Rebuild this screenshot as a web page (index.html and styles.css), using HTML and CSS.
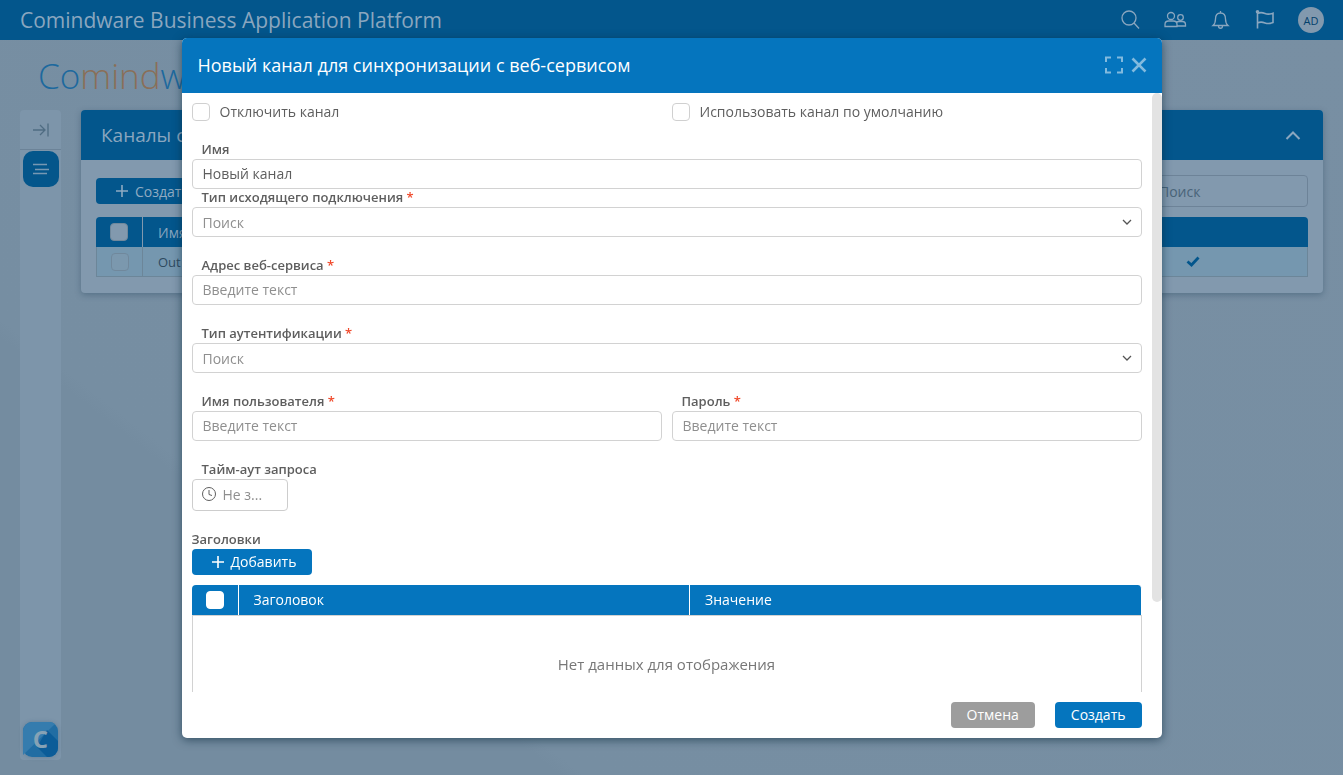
FILE: index.html
```html
<!DOCTYPE html>
<html lang="ru">
<head>
<meta charset="utf-8">
<title>Comindware Business Application Platform</title>
<link rel="stylesheet" href="styles.css">
</head>
<body>
<div class="app">
  <header class="topbar">
    <div class="topbar-title">Comindware Business Application Platform</div>
    <nav class="topbar-actions">
      <button class="icon-btn" aria-label="search"><svg width="24" height="24" viewBox="0 0 24 24"><circle cx="11" cy="10" r="7"/><path d="M16 15l5 5.500"/></svg></button>
      <button class="icon-btn" aria-label="users"><svg width="24" height="24" viewBox="0 0 24 24"><circle cx="8" cy="8" r="3.500"/><circle cx="17.500" cy="9.500" r="2.800"/><path d="M2 18.500v-2c0-2 1.500-3.500 3.500-3.500h5c2 0 3.500 1.500 3.500 3.500v2zM13.500 14.500c.6-.7 1.400-1 2.300-1h3.700c2 0 3 1.300 3 3v1.500h-8.500"/></svg></button>
      <button class="icon-btn" aria-label="notifications"><svg width="24" height="24" viewBox="0 0 24 24"><path d="M12.500 3v2M5 17.500c1.800-1.500 2.500-3 2.500-6.500 0-4 2-6 5-6s5 2 5 6c0 3.500.7 5 2.500 6.500zM10.500 18c0 3 4 3 4 0"/></svg></button>
      <button class="icon-btn" aria-label="flag"><svg class="flag" width="24" height="24" viewBox="0 0 24 24"><path d="M4.500 3v17.500M4.500 5.500c3-1.500 5-1 7.500 0s5 .8 8-.3v9.300c-3 1.300-5.500 1.300-8 .4s-4.500-1.300-7.500 0"/><circle cx="4.500" cy="3.800" r="1"/></svg></button>
      <button class="avatar">AD</button>
    </nav>
  </header>
  <div class="brand">Co<span class="brand-accent">mind</span>ware</div>
  <div class="workspace">
    <aside class="sidebar">
      <button class="side-toggle" aria-label="expand"><svg width="20" height="16" viewBox="0 0 20 16"><path d="M2 8h12M9 3l5 5-5 5M17 1.500v13"/></svg></button>
      <button class="side-menu" aria-label="menu"><svg width="18" height="12" viewBox="0 0 18 12"><path d="M1 1.500h14M3 6.500h14M1 10.500h14"/></svg></button>
      <div class="side-logo">
        <svg class="side-logo-art" viewBox="0 0 35 35"><rect width="35" height="35" rx="9" fill="#216da3"/><path d="M0 33V9a9 9 0 0 1 9-9h17a9 9 0 0 1 6 2z" fill="#357cae"/><path d="M24 8l11 11v7a9 9 0 0 1-9 9h-2L14 25z" fill="#0b5c98"/></svg>
        <span class="side-logo-letter">C</span>
      </div>
    </aside>
    <section class="panel">
      <div class="panel-head"><h2 class="panel-title">Каналы синхронизации</h2>
        <button class="icon-btn" aria-label="collapse"><svg class="medium" width="16" height="10" viewBox="0 0 16 10"><path d="M1.500 9L8 2.500 14.500 9"/></svg></button></div>
      <div class="panel-body">
        <div class="toolbar">
          <button class="btn btn-dim"><svg width="12" height="12" viewBox="0 0 12 12"><path d="M6 0v12M0 6h12"/></svg>Создать</button>
          <input class="search" type="text" placeholder="Поиск" aria-label="Поиск">
        </div>
        <table class="list">
          <thead><tr><th class="check-col"><input class="check" type="checkbox" aria-label="all"></th><th class="name-cell">Имя</th><th class="mark-col"></th></tr></thead>
          <tbody><tr><td class="check-col"><input class="check" type="checkbox" aria-label="row"></td><td class="name-cell">Out</td><td class="mark-col"><svg class="tick" width="14" height="11" viewBox="0 0 14 11"><path d="M1.500 5.500l4 3.500 7-7.500"/></svg></td></tr></tbody>
        </table>
      </div>
    </section>
  </div>
</div>

<div class="overlay">
  <form class="dialog" role="dialog" aria-labelledby="dialog-title">
    <div class="dialog-head">
      <h1 class="dialog-title" id="dialog-title">Новый канал для синхронизации с веб-сервисом</h1>
      <div class="dialog-tools">
        <button type="button" class="icon-btn" aria-label="fullscreen"><svg class="medium" width="18" height="18" viewBox="0 0 18 18"><path d="M1 6V1.500h5M12 1.500h5V6M17 12v4.500h-5M6 16.500H1V12"/></svg></button>
        <button type="button" class="icon-btn" aria-label="close"><svg class="thick" width="16" height="16" viewBox="0 0 16 16"><path d="M1.500 1.500l13 13M14.500 1.500l-13 13"/></svg></button>
      </div>
    </div>
    <div class="dialog-body">
      <div class="columns">
        <label class="check-line"><input class="check" type="checkbox">Отключить канал</label>
        <label class="check-line"><input class="check" type="checkbox">Использовать канал по умолчанию</label>
      </div>
      <div class="fields">
        <div class="field tight"><label for="name">Имя</label><input class="control" id="name" type="text" value="Новый канал"></div>
        <div class="field"><label for="conn">Тип исходящего подключения <span class="req">*</span></label>
          <div class="select-box"><select class="control" id="conn"><option>Поиск</option></select><svg class="chevron" width="10" height="6" viewBox="0 0 10 6"><path d="M1 1l4 4 4-4"/></svg></div></div>
        <div class="field"><label for="addr">Адрес веб-сервиса <span class="req">*</span></label><input class="control" id="addr" type="text" placeholder="Введите текст"></div>
        <div class="field"><label for="auth">Тип аутентификации <span class="req">*</span></label>
          <div class="select-box"><select class="control" id="auth"><option>Поиск</option></select><svg class="chevron" width="10" height="6" viewBox="0 0 10 6"><path d="M1 1l4 4 4-4"/></svg></div></div>
        <div class="columns">
          <div class="field"><label for="user">Имя пользователя <span class="req">*</span></label><input class="control" id="user" type="text" placeholder="Введите текст"></div>
          <div class="field"><label for="pass">Пароль <span class="req">*</span></label><input class="control" id="pass" type="password" placeholder="Введите текст"></div>
        </div>
        <div class="field"><label for="timeout">Тайм-аут запроса</label>
          <div class="duration"><svg width="16" height="16" viewBox="0 0 16 16"><circle cx="8" cy="7" r="6.500"/><path d="M8 3v4.500l3 1"/></svg><input class="duration-input" id="timeout" type="text" placeholder="Не з..."></div></div>
      </div>
      <div class="headers-title">Заголовки</div>
      <button type="button" class="btn"><svg width="12" height="12" viewBox="0 0 12 12"><path d="M6 0v12M0 6h12"/></svg>Добавить</button>
      <table class="grid">
        <thead><tr><th class="check-col"><input class="check" type="checkbox" aria-label="all"></th><th>Заголовок</th><th>Значение</th></tr></thead>
        <tbody><tr><td class="empty" colspan="3">Нет данных для отображения</td></tr></tbody>
      </table>
      <div class="scroll-thumb"></div>
    </div>
    <div class="dialog-foot">
      <button type="button" class="btn-foot btn-cancel">Отмена</button>
      <button type="submit" class="btn-foot">Создать</button>
    </div>
  </form>
</div>
</body>
</html>
```
FILE: styles.css
```css
* { box-sizing: border-box; }
html, body { height: 100%; }
body { margin: 0; font-family: "Open Sans", "Noto Sans", sans-serif; font-size: 14px; color: #5e5e5e; overflow: hidden; }
button, input, select { font: inherit; color: inherit; }
button { border: 0; padding: 0; background: none; cursor: pointer; }
svg { display: block; fill: none; stroke: currentColor; stroke-width: 1.3; }
svg.thick { stroke-width: 2.6; }
svg.medium { stroke-width: 2; }
svg.flag { stroke-width: 1.6; }
h1, h2 { margin: 0; font-weight: 400; }
table { border-collapse: separate; border-spacing: 0; table-layout: fixed; width: 100%; }
th, td { padding: 0; text-align: left; font-weight: 400; }

.app { display: flex; flex-direction: column; min-height: 100%; background: linear-gradient(38deg, #748ca0 0 24%, #768ea2 25%, #788fa3 100%); }
.topbar { display: flex; align-items: center; justify-content: space-between; height: 40px; padding: 0 19px 0 20px; background: #03568c; color: #8aa6bf; }
.topbar-title { font-size: 21px; line-height: 38px; }
.topbar-actions { display: flex; align-items: center; gap: 21px; }
.avatar { width: 26px; height: 26px; border-radius: 50%; background: #8299ae; color: #03406b; font-size: 11px; }
.icon-btn { display: flex; }
.brand { height: 70px; padding-left: 38px; font-size: 35px; font-weight: 300; line-height: 72px; color: #1d699e; }
.brand-accent { color: #8a6f58; }
.workspace { flex: 1; display: flex; align-items: flex-start; gap: 20px; padding: 0 20px 15px; }
.sidebar { align-self: stretch; width: 41px; display: flex; flex-direction: column; align-items: center; padding-bottom: 3px; border-radius: 4px; background: #7d95aa; }
.side-toggle { width: 41px; height: 40px; display: grid; place-items: center; border-bottom: 1px solid #6c8398; color: #4f6c82; }
.side-menu { width: 36px; height: 36px; margin-top: 1px; display: grid; place-items: center; border-radius: 10px; background: #04568b; color: #7798b2; }
.side-logo { position: relative; width: 35px; height: 35px; margin-top: auto; border-radius: 9px; box-shadow: 0 0 4px rgba(40, 80, 110, .3); }
.side-logo-art { stroke: none; }
.side-logo-letter { position: absolute; inset: 0; text-align: center; font-size: 24px; font-weight: 700; line-height: 34px; color: #86a2b5; }

.panel { flex: 1; border-radius: 4px; overflow: hidden; background: #8299ae; box-shadow: 0 2px 6px rgba(30, 60, 85, .35); }
.panel-head { display: flex; align-items: center; justify-content: space-between; height: 50px; padding: 0 22px 0 20px; background: #03568c; color: #8aa6bf; }
.panel-title { font-size: 19px; }
.panel-body { padding: 15px 15px 16px; }
.toolbar { display: flex; align-items: center; justify-content: space-between; margin-bottom: 10px; }
.search { width: 170px; height: 32px; padding: 0 20px; border: 1px solid #6d8398; border-radius: 4px; background: transparent; }
.search::placeholder { color: #496479; }
.btn { display: flex; align-items: center; gap: 7px; height: 26px; padding: 0 16px 0 20px; border-radius: 4px; background: #0575be; color: #fff; }
.btn svg { stroke-width: 1.6; }
.btn-dim { background: #03568c; color: #8fabc2; }
.check { appearance: none; display: block; width: 18px; height: 18px; margin: 0; border: 1px solid #d0d0d0; border-radius: 4px; background: #fff; }
.check-col { width: 47px; }
.check-col .check { margin: 0 auto; }
.list th, .list td { height: 30px; }
.list th { background: #03568c; color: #8aa6bf; border-right: 1px solid #8299ae; }
.list th:last-child { border-right: 0; border-top-right-radius: 4px; }
.list th:first-child { border-top-left-radius: 4px; }
.list td { background: #7597af; color: #2e4a5f; font-size: 13px; border-bottom: 1px solid #6c8699; }
.list td.check-col { border-right: 1px solid #6c8699; }
.list td:first-child { border-left: 1px solid #6c8699; }
.list td:last-child { border-right: 1px solid #6c8699; }
.list .name-cell { padding-left: 15px; }
.list .mark-col { width: 230px; }
.list .check { border-color: #70889c; background: #8299ae; }
.list td .check { background: #7b98ae; }
.tick { margin: 0 auto; stroke: #03568c; stroke-width: 2.8; }

.overlay { position: fixed; inset: 0; display: grid; place-items: center; }
.dialog { display: flex; flex-direction: column; width: min(980px, 96vw); height: min(700px, 96vh); border-radius: 5px; overflow: hidden; background: #fff; box-shadow: 0 2px 10px rgba(10, 40, 60, .6); }
.dialog-head { flex: none; display: flex; align-items: center; justify-content: space-between; height: 55px; padding: 0 15px 0 16px; background: #0575be; color: #fff; }
.dialog-title { font-size: 18px; font-weight: 500; }
.dialog-tools { display: flex; align-items: center; gap: 8px; color: #82bade; }
.dialog-body { position: relative; flex: 1; min-height: 0; overflow: hidden; padding: 10px 20px 0 10px; }
.columns { display: grid; grid-template-columns: 1fr 1fr; gap: 10px; }
.check-line { display: flex; align-items: center; gap: 10px; height: 18px; }
.fields { display: flex; flex-direction: column; gap: 20px; padding: 20px 0; }
.tight { margin-bottom: -20px; }
.field label { display: block; height: 18px; padding-left: 10px; line-height: 16px; font-size: 13px; font-weight: 600; }
.req { color: #f04a2c; }
.control { display: block; width: 100%; height: 30px; padding: 0 10px; border: 1px solid #d2d2d2; border-radius: 4px; background: #fff; }
::placeholder { color: #8f8f8f; opacity: 1; }
.select-box { position: relative; }
select.control { appearance: none; padding-top: 1px; color: #8f8f8f; }
.chevron { position: absolute; right: 10px; top: 12px; color: #555; }
.duration { display: flex; align-items: center; gap: 6px; width: 96px; height: 32px; padding: 0 8px; border: 1px solid #cdcdcd; border-radius: 4px; }
.duration svg { flex: none; stroke-width: 1; }
.duration-input { width: 100%; min-width: 0; padding: 0; border: 0; background: none; }
.headers-title { height: 18px; line-height: 16px; font-size: 13px; font-weight: 600; }
.grid { margin-top: 10px; }
.grid th { height: 30px; background: #0575be; color: #fff; border-right: 1px solid #fff; }
.grid th:not(.check-col) { padding-left: 15px; }
.grid th:first-child { border-top-left-radius: 4px; }
.grid th:last-child { border-top-right-radius: 4px; }
.grid .check { border-color: #fff; }
.grid .empty { height: 98px; border: 1px solid #d2d2d2; text-align: center; font-size: 15px; color: #777; }
.scroll-thumb { position: absolute; top: 0; right: 0; width: 10px; height: 85%; border-radius: 5px; background: #e3e3e3; }
.dialog-foot { flex: none; display: flex; justify-content: flex-end; gap: 20px; padding: 10px 20px; }
.btn-foot { height: 26px; padding: 0 16px; border-radius: 4px; background: #0575be; color: #fff; }
.btn-cancel { background: #9d9d9d; }
```
